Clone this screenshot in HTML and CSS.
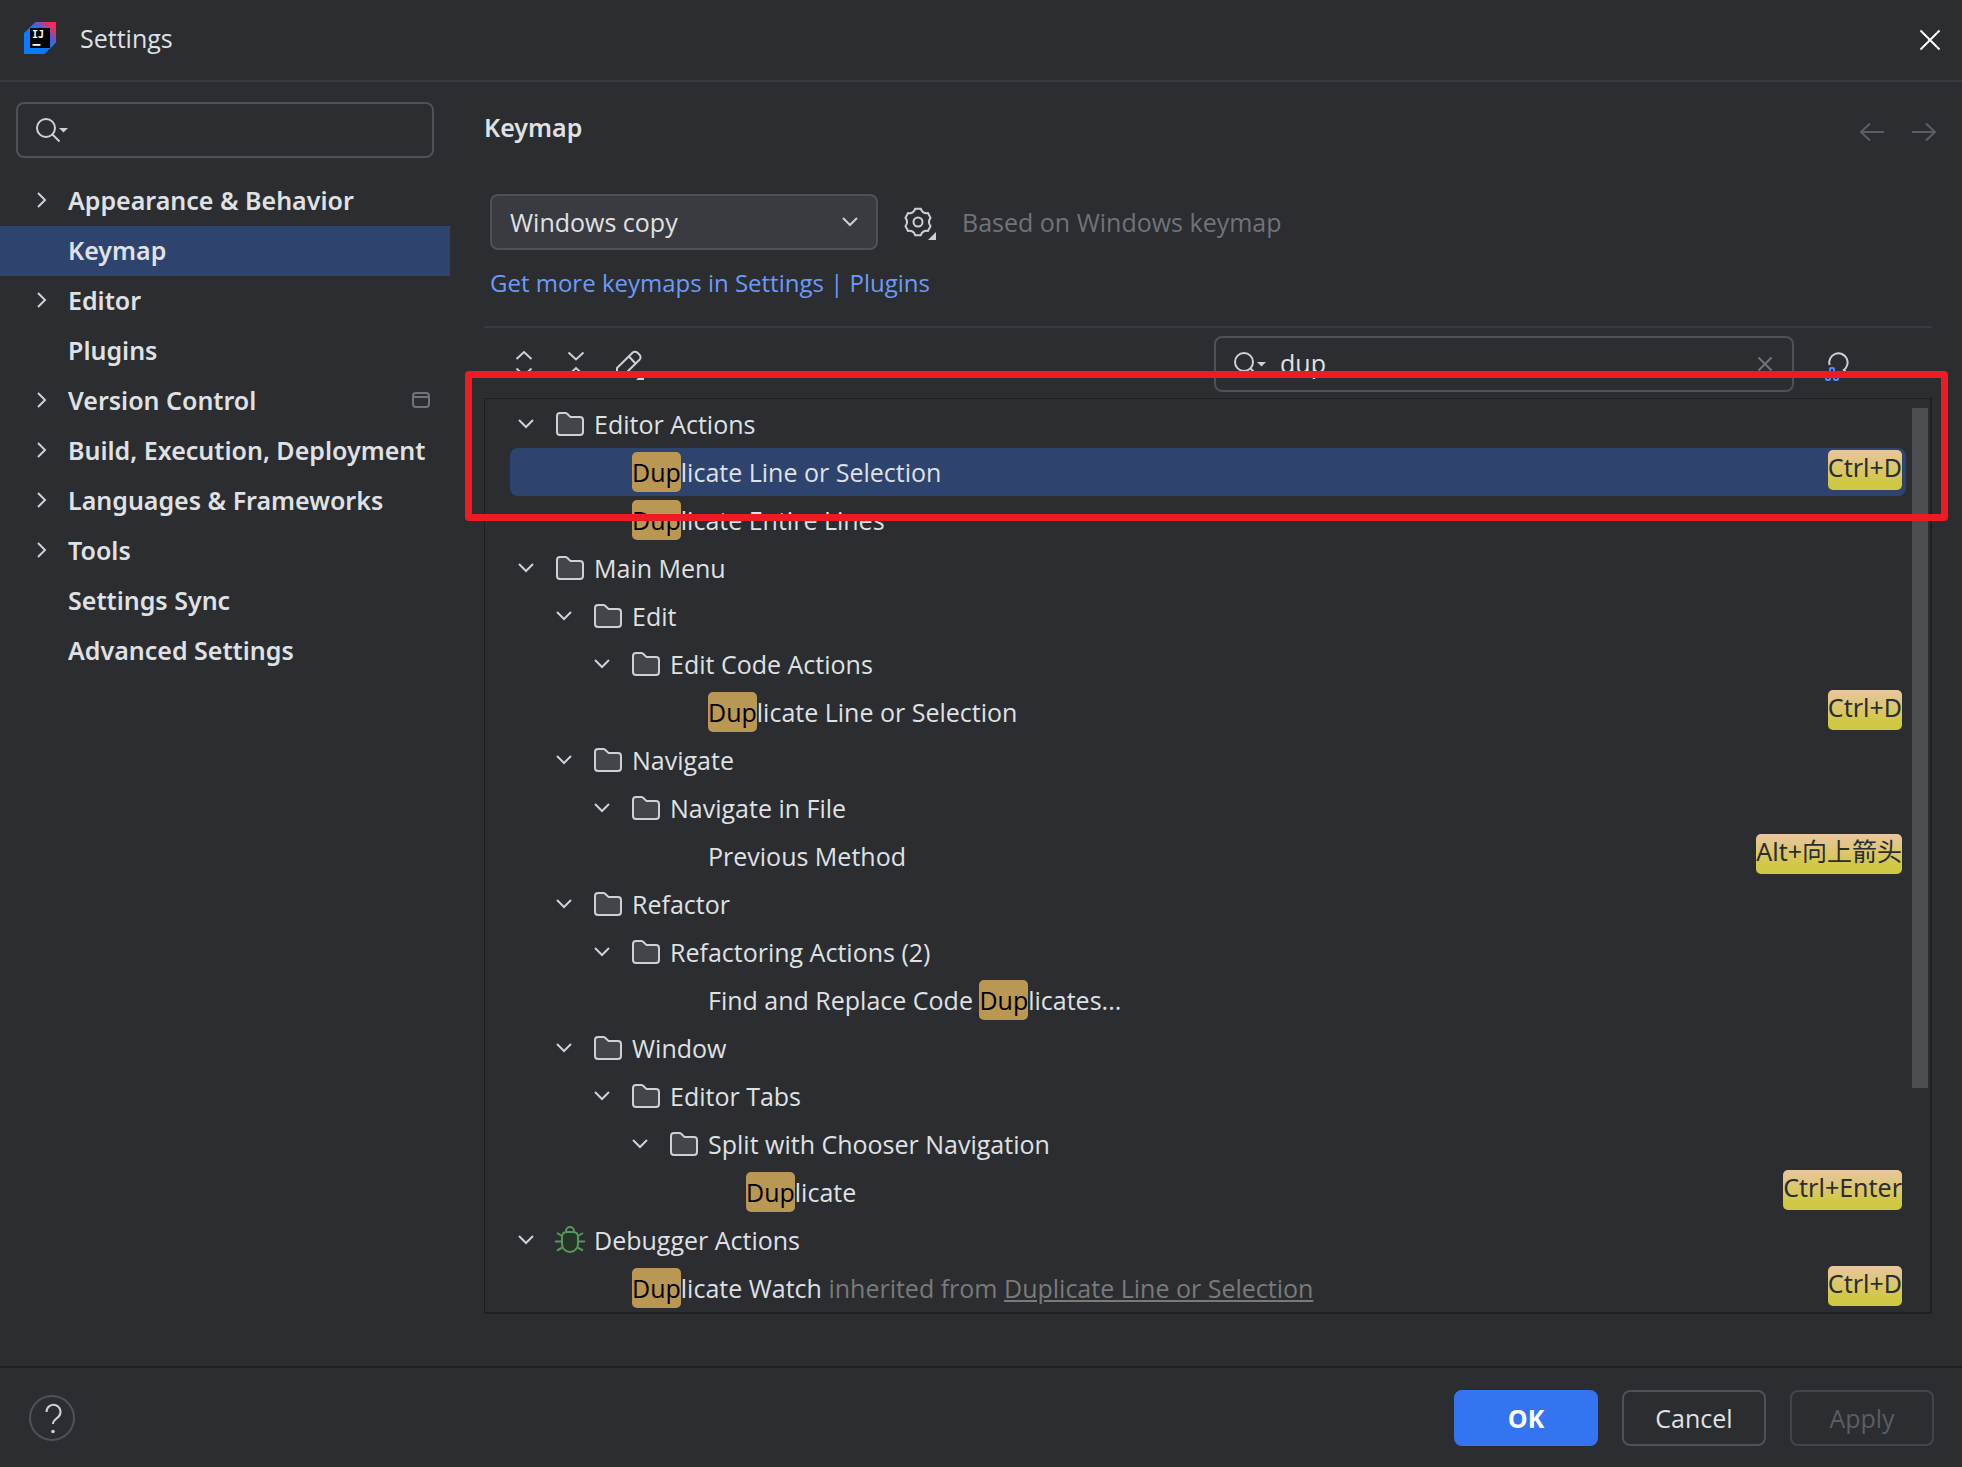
FILE: index.html
```html
<!DOCTYPE html>
<html lang="en">
<head>
<meta charset="utf-8">
<title>Settings</title>
<link rel="stylesheet" href="styles.css">
</head>
<body>
<svg class="defs" aria-hidden="true">
  <symbol id="down" viewBox="0 0 16 10"><path d="M1 1l7 7 7-7"/></symbol>
  <symbol id="right" viewBox="0 0 10 16"><path d="M1 1l7 7-7 7"/></symbol>
  <symbol id="folder" viewBox="0 0 28 24"><path class="folder-shape" d="M1 4a3 3 0 0 1 3-3h5.500a2 2 0 0 1 1.400.6L14.500 5H24a3 3 0 0 1 3 3v12a3 3 0 0 1-3 3H4a3 3 0 0 1-3-3z"/></symbol>
  <symbol id="search" viewBox="0 0 36 28"><circle cx="12" cy="12" r="9"/><path d="M18.500 18.500l7 7"/><path class="solid" d="M25 12h9l-4.500 4.500z"/></symbol>
</svg>

<header class="titlebar">
  <svg class="logo" width="32" height="32" viewBox="0 0 32 32" aria-hidden="true">
    <defs><linearGradient id="brand" gradientUnits="userSpaceOnUse" x1="18" y1="14" x2="29" y2="3">
      <stop offset="0" stop-color="#087cfa"/><stop offset=".25" stop-color="#4a62d8"/><stop offset=".95" stop-color="#fe2857"/>
    </linearGradient></defs>
    <path fill="url(#brand)" d="M11.500 0H31q1 0 1 1v19.500L20.500 32H1q-1 0-1-1V11z"/>
    <path d="M6 6h20v20H6z"/>
    <text x="8" y="15.500">IJ</text>
    <path fill="#fff" d="M8.500 22h8v1.800h-8z"/>
  </svg>
  <h1>Settings</h1>
  <button class="icon-button close" aria-label="Close"><svg width="20" height="20" viewBox="0 0 20 20"><path d="M.5.5l19 19M19.500.5l-19 19"/></svg></button>
</header>

<main class="body">
  <aside class="sidebar">
    <label class="search">
      <svg width="36" height="28"><use href="#search"/></svg>
      <input type="text" aria-label="Search settings">
    </label>
    <ul class="nav">
      <li><svg width="10" height="16"><use href="#right"/></svg><span>Appearance &amp; Behavior</span></li>
      <li class="current"><span>Keymap</span></li>
      <li><svg width="10" height="16"><use href="#right"/></svg><span>Editor</span></li>
      <li><span>Plugins</span></li>
      <li><svg width="10" height="16"><use href="#right"/></svg><span>Version Control</span>
        <svg class="project" width="18" height="16" viewBox="0 0 18 16"><rect x="1" y="1" width="16" height="14" rx="3"/><path d="M1 5h16"/></svg></li>
      <li><svg width="10" height="16"><use href="#right"/></svg><span>Build, Execution, Deployment</span></li>
      <li><svg width="10" height="16"><use href="#right"/></svg><span>Languages &amp; Frameworks</span></li>
      <li><svg width="10" height="16"><use href="#right"/></svg><span>Tools</span></li>
      <li><span>Settings Sync</span></li>
      <li><span>Advanced Settings</span></li>
    </ul>
  </aside>

  <section class="content">
    <div class="heading">
      <h2>Keymap</h2>
      <div class="history">
        <button class="icon-button" disabled aria-label="Back"><svg width="32" height="32" viewBox="0 0 32 32"><path d="M28 20H5M14 11.500L5 20l9 8.500"/></svg></button>
        <button class="icon-button" disabled aria-label="Forward"><svg width="32" height="32" viewBox="0 0 32 32"><path d="M4 20h23M18 11.500l9 8.500-9 8.500"/></svg></button>
      </div>
    </div>

    <div class="panel">
      <div class="scheme">
        <div class="combo">
          <select aria-label="Keymap scheme"><option>Windows copy</option></select>
          <svg width="16" height="10"><use href="#down"/></svg>
        </div>
        <button class="icon-button gear" aria-label="Keymap actions"><svg width="40" height="40" viewBox="0 0 40 40">
          <path d="M17.200 6.800H22.800Q24.700 11.900 30 11L32.500 15.800Q29.400 20 32.500 24.200L30 29Q24.700 28.100 22.800 33.200H17.200Q15.300 28.100 10 29L7.500 24.200Q10.600 20 7.500 15.800L10 11Q15.300 11.900 17.200 6.800Z"/><circle cx="20" cy="20" r="4.500"/><path class="solid" d="M38 30v8h-8z"/></svg></button>
        <span class="hint">Based on Windows keymap</span>
      </div>
      <a class="more" href="#plugins">Get more keymaps in Settings | Plugins</a>

      <div class="toolbar">
        <button class="icon-button" aria-label="Expand all"><svg width="32" height="32" viewBox="0 0 32 32"><path d="M8.500 11L16 4l7.500 7M8.500 20.500l7.500 7 7.500-7"/></svg></button>
        <button class="icon-button" aria-label="Collapse all"><svg width="32" height="32" viewBox="0 0 32 32"><path d="M8.500 4.500l7.500 7 7.500-7M8.500 27l7.500-7 7.500 7"/></svg></button>
        <button class="icon-button" aria-label="Edit shortcut"><svg width="32" height="32" viewBox="0 0 32 32"><path d="M5 20L20.500 4.800a3.500 3.500 0 0 1 5 0l2 2a3.500 3.500 0 0 1 0 5L12 27H5zM17 8.500l6.500 7"/><path class="solid" d="M32 24v8h-8z"/></svg></button>
        <div class="search filter">
          <svg width="36" height="28"><use href="#search"/></svg>
          <input type="text" value="dup" aria-label="Search actions">
          <button class="icon-button clear" aria-label="Clear"><svg width="14" height="14" viewBox="0 0 14 14"><path d="M.5.5l13 13M13.500.5l-13 13"/></svg></button>
        </div>
        <button class="icon-button by-key" aria-label="Find actions by shortcut"><svg width="32" height="32" viewBox="0 0 32 32"><path d="M9.600 17A9.200 9.200 0 1 1 23 22.500M24 22l5 5"/><path class="keys" d="M10 24v-3q0-1 1-1h2q1 0 1 1v3M6 28v3q0 1 1 1h2q1 0 1-1v-3M14 28v3q0 1 1 1h2q1 0 1-1v-3"/></svg></button>
      </div>

      <div class="actions">
        <ul class="tree">
          <li class="l0"><svg width="16" height="10"><use href="#down"/></svg><svg class="kind" width="28" height="24"><use href="#folder"/></svg><span>Editor Actions</span></li>
          <li class="l1 leaf selected"><span><mark>Dup</mark>licate Line or Selection</span><kbd>Ctrl+D</kbd></li>
          <li class="l1 leaf"><span><mark>Dup</mark>licate Entire Lines</span></li>
          <li class="l0"><svg width="16" height="10"><use href="#down"/></svg><svg class="kind" width="28" height="24"><use href="#folder"/></svg><span>Main Menu</span></li>
          <li class="l1"><svg width="16" height="10"><use href="#down"/></svg><svg class="kind" width="28" height="24"><use href="#folder"/></svg><span>Edit</span></li>
          <li class="l2"><svg width="16" height="10"><use href="#down"/></svg><svg class="kind" width="28" height="24"><use href="#folder"/></svg><span>Edit Code Actions</span></li>
          <li class="l3 leaf"><span><mark>Dup</mark>licate Line or Selection</span><kbd>Ctrl+D</kbd></li>
          <li class="l1"><svg width="16" height="10"><use href="#down"/></svg><svg class="kind" width="28" height="24"><use href="#folder"/></svg><span>Navigate</span></li>
          <li class="l2"><svg width="16" height="10"><use href="#down"/></svg><svg class="kind" width="28" height="24"><use href="#folder"/></svg><span>Navigate in File</span></li>
          <li class="l3 leaf"><span>Previous Method</span><kbd>Alt+向上箭头</kbd></li>
          <li class="l1"><svg width="16" height="10"><use href="#down"/></svg><svg class="kind" width="28" height="24"><use href="#folder"/></svg><span>Refactor</span></li>
          <li class="l2"><svg width="16" height="10"><use href="#down"/></svg><svg class="kind" width="28" height="24"><use href="#folder"/></svg><span>Refactoring Actions (2)</span></li>
          <li class="l3 leaf"><span>Find and Replace Code <mark>Dup</mark>licates...</span></li>
          <li class="l1"><svg width="16" height="10"><use href="#down"/></svg><svg class="kind" width="28" height="24"><use href="#folder"/></svg><span>Window</span></li>
          <li class="l2"><svg width="16" height="10"><use href="#down"/></svg><svg class="kind" width="28" height="24"><use href="#folder"/></svg><span>Editor Tabs</span></li>
          <li class="l3"><svg width="16" height="10"><use href="#down"/></svg><svg class="kind" width="28" height="24"><use href="#folder"/></svg><span>Split with Chooser Navigation</span></li>
          <li class="l4 leaf"><span><mark>Dup</mark>licate</span><kbd>Ctrl+Enter</kbd></li>
          <li class="l0"><svg width="16" height="10"><use href="#down"/></svg><svg class="kind bug" width="28" height="28" viewBox="1 0 28 28"><path class="bug-body" d="M12 6h6q5 0 5 5v7a8 8 0 0 1-16 0v-7q0-5 5-5z"/><path d="M11 6V5a4 4 0 0 1 8 0v1M0 15.500h7M23 15.500h7M2 7l5 3M28 7l-5 3M2 24.500l5.500-3M28 24.500l-5.500-3"/></svg><span>Debugger Actions</span></li>
          <li class="l1 leaf"><span><mark>Dup</mark>licate Watch <span class="inherited">inherited from <u>Duplicate Line or Selection</u></span></span><kbd>Ctrl+D</kbd></li>
        </ul>
        <div class="track"><div class="thumb"></div></div>
        <div class="callout"></div>
      </div>
    </div>
  </section>
</main>

<footer class="footer">
  <button class="help" aria-label="Help"><svg width="46" height="46" viewBox="0 0 46 46"><path d="M15.500 15a7 7 0 1 1 12.200 4.500c-2 2.400-5.700 3.500-5.700 7.500"/><circle class="solid" cx="22" cy="34.500" r="1.800"/></svg></button>
  <button class="button primary">OK</button>
  <button class="button">Cancel</button>
  <button class="button" disabled>Apply</button>
</footer>
</body>
</html>
```
FILE: styles.css
```css
* { box-sizing: border-box; }

body {
  margin: 0;
  min-height: 100vh;
  display: flex;
  flex-direction: column;
  background: #2b2d30;
  color: #dfe1e5;
  font: 25px/34px "Open Sans", "Noto Sans CJK SC", sans-serif;
}

h1, h2, ul { margin: 0; padding: 0; font-size: inherit; font-weight: 400; list-style: none; }
button, input, select { font: inherit; color: inherit; margin: 0; }

svg {
  flex: none;
  fill: none;
  stroke: #ced0d6;
  stroke-width: 2;
  overflow: visible;
}
.defs { position: absolute; width: 0; height: 0; }
.solid { fill: #ced0d6; stroke: none; }
.folder-shape { fill: #43454a; }

.icon-button { display: flex; padding: 0; border: 0; background: none; }

/* Title bar */
.titlebar {
  display: flex;
  align-items: center;
  gap: 24px;
  height: 82px;
  padding: 0 22px 4px 24px;
  border-bottom: 2px solid #393b40;
}
.logo { stroke: none; fill: #000; }
.logo text { fill: #fff; font: bold 10px/1 "DejaVu Sans Mono", monospace; }
.close { margin-left: auto; padding-top: 4px; }
.close svg { stroke: #fff; }

.body { display: flex; flex: 1; }

/* Sidebar */
.sidebar { flex: none; width: 450px; padding-top: 20px; }
.search {
  display: flex;
  align-items: center;
  height: 56px;
  padding-left: 16px;
  border: 2px solid #4e5157;
  border-radius: 8px;
}
.search input {
  flex: 1;
  min-width: 0;
  padding: 0 0 2px 12px;
  border: 0;
  outline: 0;
  background: none;
}
.sidebar .search { margin: 0 16px; }
.nav { margin-top: 18px; font-family: "Noto Sans", sans-serif; font-weight: 600; }
.nav li { display: flex; align-items: center; height: 50px; padding: 0 20px 2px 37px; }
.nav span { margin-left: 21px; }
.nav span:first-child { margin-left: 31px; }
.nav .current { background: #2e436e; }
.nav .project { margin-left: auto; stroke: #6f737a; }

/* Content */
.content { flex: 1; min-width: 0; padding: 28px 22px 52px 34px; }
.heading { display: flex; justify-content: space-between; height: 34px; }
.heading h2 { font-family: "Noto Sans", sans-serif; font-weight: 600; }
.history { display: flex; align-items: flex-end; gap: 20px; }
.history svg { stroke: #5a5d63; }
.panel { margin: 50px 8px 0 0; }

.scheme { display: flex; align-items: center; padding-left: 6px; }
.combo { display: grid; align-items: center; width: 388px; }
.combo > * { grid-area: 1 / 1; }
.combo select {
  height: 56px;
  padding: 0 48px 0 18px;
  border: 2px solid #4e5157;
  border-radius: 8px;
  background: #393b40;
  appearance: none;
}
.combo svg { justify-self: end; margin-right: 20px; pointer-events: none; }
.gear { margin: 0 24px 0 20px; }
.hint { color: #6f737a; }
.more {
  display: block;
  width: max-content;
  margin: 16px 0 26px 6px;
  color: #6b9bfa;
  font-size: 24px;
  text-decoration: none;
}

.toolbar {
  display: flex;
  align-items: center;
  gap: 20px;
  padding: 8px 80px 6px 24px;
  border-top: 2px solid #393b40;
}
.filter { width: 580px; margin: 0 6px 0 auto; padding-right: 20px; }
.clear svg { stroke: #6f737a; }
.by-key .keys { stroke: #548af7; }

/* Action tree */
.actions {
  position: relative;
  display: flex;
  padding: 1px 0 0 25px;
  border: solid #1e1f22;
  border-width: 1px 2px 2px 1px;
}
.tree { flex: 1; min-width: 0; }
.tree li {
  display: flex;
  align-items: center;
  height: 48px;
  padding: 0 4px 0 8px;
  border-radius: 8px;
  white-space: pre;
}
.tree .l1 { padding-left: 46px; }
.tree .l2 { padding-left: 84px; }
.tree .l3 { padding-left: 122px; }
.tree .l4 { padding-left: 160px; }
.tree .kind { margin: 0 10px 0 22px; }
/* A leaf keeps the space of its missing chevron and folder */
.tree .leaf > span { margin-left: 76px; }
.tree .selected { background: #2e436e; }
.tree .bug { stroke: #57965c; }
.bug-body { fill: #253627; }
mark {
  display: inline-block;
  padding: 3px 0;
  border-radius: 5px;
  background: #ba9752;
  color: #000;
}
.inherited { color: #7a7a7a; }
kbd {
  align-self: flex-start;
  height: 40px;
  margin: 2px 0 0 auto;
  border-radius: 5px;
  background: linear-gradient(#e9c6a0, #d0c843 80%);
  color: #2b2d30;
  font-family: "Noto Sans", "Noto Sans CJK SC", sans-serif;
}
.track { width: 24px; padding: 8px 2px 0 6px; }
.thumb { height: 680px; background: #4d4e51; }

.callout {
  position: absolute;
  inset: -28px -18px auto -20px;
  height: 150px;
  border: 7px solid #ed1c24;
  border-radius: 4px;
  pointer-events: none;
}

/* Footer */
.footer {
  display: flex;
  align-items: center;
  gap: 24px;
  padding: 22px 28px 21px 29px;
  border-top: 2px solid #1e1f22;
}
.help {
  display: grid;
  place-items: center;
  width: 46px;
  height: 46px;
  margin-right: auto;
  padding: 0;
  border: 2px solid #4e5157;
  border-radius: 50%;
  background: none;
}
.button {
  width: 144px;
  height: 56px;
  border: 2px solid #4e5157;
  border-radius: 8px;
  background: none;
}
.button.primary {
  border-color: #3574f0;
  background: #3574f0;
  color: #fff;
  font-weight: 700;
}
.button:disabled { border-color: #43454a; color: #5a5d63; }
```
